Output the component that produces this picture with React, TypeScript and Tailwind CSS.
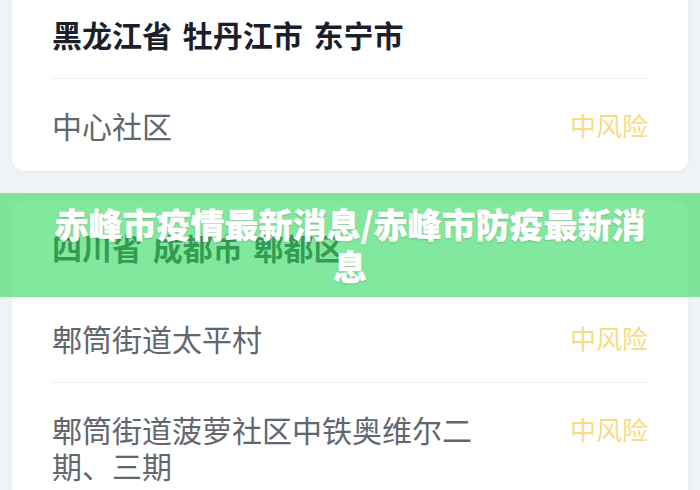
import React from 'react';

interface Area {
  name: string;
  level: string;
}

interface Region {
  title: string;
  areas: Area[];
}

const regions: Region[] = [
  { title: '黑龙江省 牡丹江市 东宁市', areas: [{ name: '中心社区', level: '中风险' }] },
  {
    title: '四川省 成都市 郫都区',
    areas: [
      { name: '郫筒街道太平村', level: '中风险' },
      { name: '郫筒街道菠萝社区中铁奥维尔二期、三期', level: '中风险' },
    ],
  },
];

const RegionCard: React.FC<{ region: Region; className?: string }> = ({ region, className = '' }) => (
  <div className={`mx-3 rounded-xl bg-white px-10 shadow-[0_1px_4px_rgba(0,0,0,0.04)] ${className}`}>
    <div className="pt-7 pb-[26px] text-[30px] font-bold leading-9 text-[#1b1f29] [word-spacing:4px]">{region.title}</div>
    {region.areas.map((area) => (
      <div key={area.name} className="flex items-start justify-between gap-20 border-t border-[#eef0f2] pt-7 pb-[26px]">
        <span className="flex-1 text-[30px] leading-9 text-[#62666d]">{area.name}</span>
        <span className="text-[26px] leading-9 text-[#f7dc82]">{area.level}</span>
      </div>
    ))}
  </div>
);

export default function App() {
  return (
    <div
      className="relative h-[490px] w-[700px] overflow-hidden bg-[#eff3f6]"
      style={{ fontFamily: '"Noto Sans CJK SC", "Noto Sans", sans-serif' }}
    >
      <RegionCard region={regions[0]} className="-mt-[12px] pb-0.5" />
      <RegionCard region={regions[1]} className="mt-[30px]" />

      {/* headline banner over the list */}
      <div className="absolute left-0 right-0 top-[193px] h-[104px] bg-[rgba(66,220,106,0.66)] px-[50px] py-[10px]">
        <h1 className="text-center text-[34px] font-black leading-[42px] text-white [-webkit-text-stroke:0.3px_white] [text-shadow:0_1px_2px_rgba(0,0,0,0.2)]">
          赤峰市疫情最新消息/赤峰市防疫最新消息
        </h1>
      </div>
    </div>
  );
}
